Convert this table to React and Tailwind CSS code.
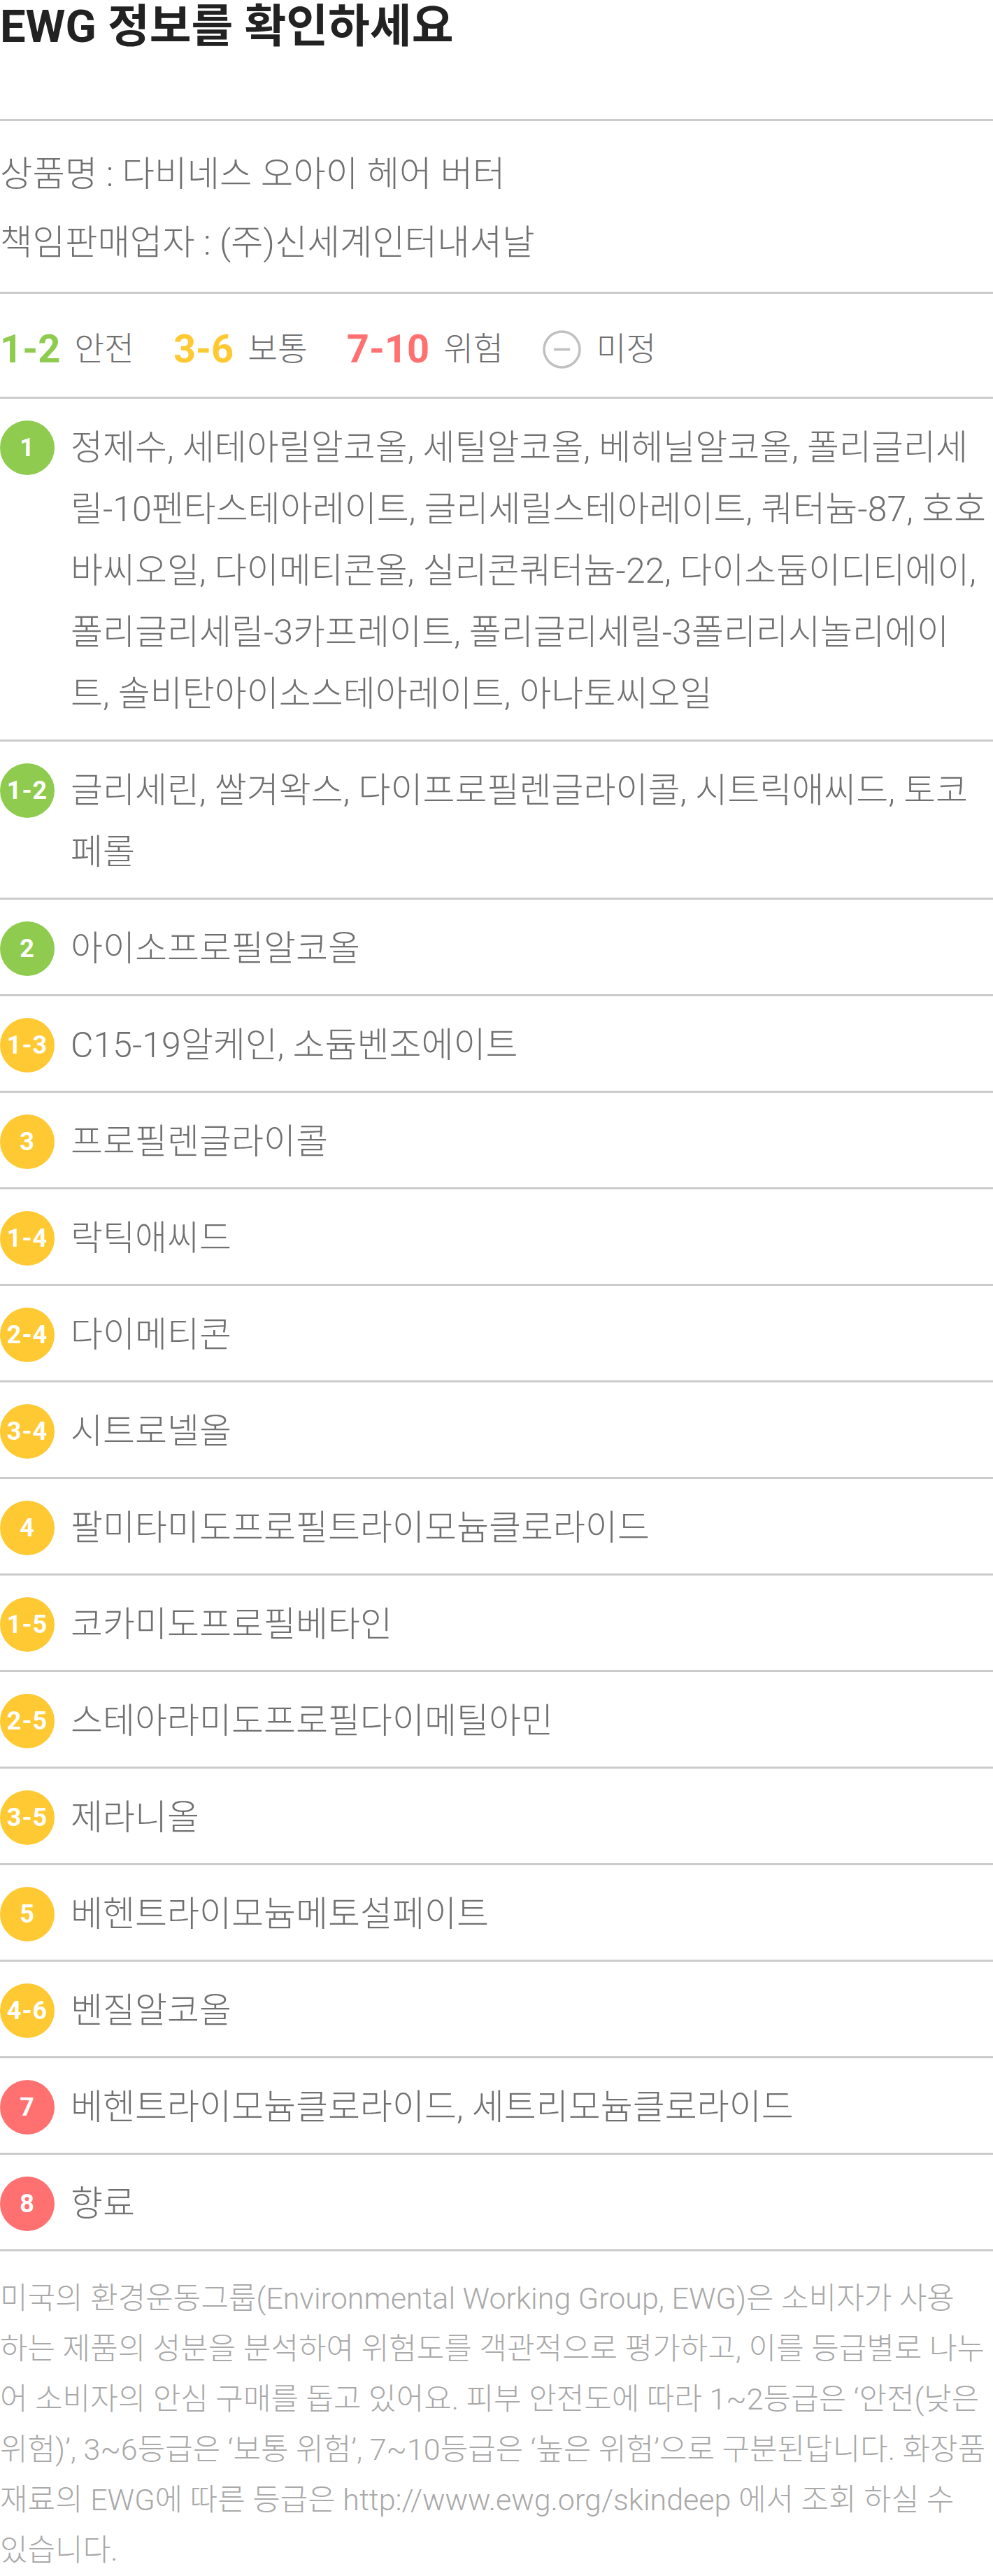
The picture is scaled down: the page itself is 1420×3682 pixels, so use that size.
import React from 'react';

const BADGE = {
    green: 'bg-[#8fcb4f]',
    yellow: 'bg-[#fec933]',
    red: 'bg-[#ff7171]',
};

const ingredients = [
    {
        grade: '1',
        color: 'green',
        lines: [
            '정제수, 세테아릴알코올, 세틸알코올, 베헤닐알코올, 폴리글리세',
            '릴-10펜타스테아레이트, 글리세릴스테아레이트, 쿼터늄-87, 호호',
            '바씨오일, 다이메티콘올, 실리콘쿼터늄-22, 다이소듐이디티에이,',
            '폴리글리세릴-3카프레이트, 폴리글리세릴-3폴리리시놀리에이',
            '트, 솔비탄아이소스테아레이트, 아나토씨오일',
        ],
    },
    {
        grade: '1-2',
        color: 'green',
        lines: ['글리세린, 쌀겨왁스, 다이프로필렌글라이콜, 시트릭애씨드, 토코', '페롤'],
    },
    { grade: '2', color: 'green', lines: ['아이소프로필알코올'] },
    { grade: '1-3', color: 'yellow', lines: ['C15-19알케인, 소듐벤조에이트'] },
    { grade: '3', color: 'yellow', lines: ['프로필렌글라이콜'] },
    { grade: '1-4', color: 'yellow', lines: ['락틱애씨드'] },
    { grade: '2-4', color: 'yellow', lines: ['다이메티콘'] },
    { grade: '3-4', color: 'yellow', lines: ['시트로넬올'] },
    { grade: '4', color: 'yellow', lines: ['팔미타미도프로필트라이모늄클로라이드'] },
    { grade: '1-5', color: 'yellow', lines: ['코카미도프로필베타인'] },
    { grade: '2-5', color: 'yellow', lines: ['스테아라미도프로필다이메틸아민'] },
    { grade: '3-5', color: 'yellow', lines: ['제라니올'] },
    { grade: '5', color: 'yellow', lines: ['베헨트라이모늄메토설페이트'] },
    { grade: '4-6', color: 'yellow', lines: ['벤질알코올'] },
    { grade: '7', color: 'red', lines: ['베헨트라이모늄클로라이드, 세트리모늄클로라이드'] },
    { grade: '8', color: 'red', lines: ['향료'] },
];

const notice = [
    '미국의 환경운동그룹(Environmental Working Group, EWG)은 소비자가 사용',
    '하는 제품의 성분을 분석하여 위험도를 객관적으로 평가하고, 이를 등급별로 나누',
    '어 소비자의 안심 구매를 돕고 있어요. 피부 안전도에 따라 1~2등급은 ‘안전(낮은',
    '위험)’, 3~6등급은 ‘보통 위험’, 7~10등급은 ‘높은 위험’으로 구분된답니다. 화장품',
    '재료의 EWG에 따른 등급은 http://www.ewg.org/skindeep 에서 조회 하실 수',
    '있습니다.',
];

const IngredientRow = ({ item }) => (
    <div className="flex items-start gap-[23px] border-b-[3px] border-[#cccccc] pt-[26px] pb-[21px]">
        <span
            className={`${BADGE[item.color]} mt-[5px] flex h-[78px] w-[78px] shrink-0 items-center justify-center rounded-full font-[Roboto,sans-serif] text-[36px] font-bold tracking-[1px] text-white`}
        >
            {item.grade}
        </span>
        <p className="text-[50px] leading-[88px] font-light text-[#707070]">
            {item.lines.map((line, i) => (
                <span key={i} className="block whitespace-nowrap">{line}</span>
            ))}
        </p>
    </div>
);

const App = () => {
    return (
        <div className="min-h-screen overflow-x-clip bg-white font-[Roboto,'Noto_Sans_CJK_KR',sans-serif]">

            {/* title */}
            <div className="border-b-[3px] border-[#cccccc] pt-[4px] pb-[98px]">
                <h2 className="text-[65px] leading-[68px] font-bold text-[#222222]">EWG 정보를 확인하세요</h2>
            </div>

            {/* product info */}
            <div className="border-b-[3px] border-[#cccccc] pt-[27px] pb-[21px] text-[50.5px] leading-[98px] font-light text-[#707070]">
                <p>상품명 : 다비네스 오아이 헤어 버터</p>
                <p>책임판매업자 : (주)신세계인터내셔날</p>
            </div>

            {/* legend */}
            <div className="flex items-center gap-[56px] border-b-[3px] border-[#cccccc] pt-[35px] pb-[24px] leading-[88px]">
                <div className="flex items-center gap-[20px]">
                    <span className="text-[56px] font-bold text-[#8fcb4f]">1-2</span>
                    <span className="text-[46.5px] font-light text-[#707070]">안전</span>
                </div>
                <div className="flex items-center gap-[20px]">
                    <span className="text-[56px] font-bold text-[#fec933]">3-6</span>
                    <span className="text-[46.5px] font-light text-[#707070]">보통</span>
                </div>
                <div className="flex items-center gap-[20px]">
                    <span className="text-[56px] font-bold text-[#ff7171]">7-10</span>
                    <span className="text-[46.5px] font-light text-[#707070]">위험</span>
                </div>
                <div className="flex items-center gap-[22px]">
                    <svg width="55" height="55" viewBox="0 0 55 55" fill="none">
                        <circle cx="27.5" cy="27.5" r="25.5" stroke="#c0c0c0" strokeWidth="3.5" />
                        <line x1="16" y1="27.5" x2="39" y2="27.5" stroke="#c0c0c0" strokeWidth="3.5" />
                    </svg>
                    <span className="text-[46.5px] font-light text-[#707070]">미정</span>
                </div>
            </div>

            {/* ingredient list */}
            <div>
                {ingredients.map(item => (
                    <IngredientRow key={item.grade} item={item} />
                ))}
            </div>

            {/* EWG notice */}
            <p className="pt-[31px] text-[43px] leading-[72px] font-light text-[#a9a9a9]">
                {notice.map((line, i) => (
                    <span key={i} className="block whitespace-nowrap">{line}</span>
                ))}
            </p>

        </div>
    );
};

export default App;
